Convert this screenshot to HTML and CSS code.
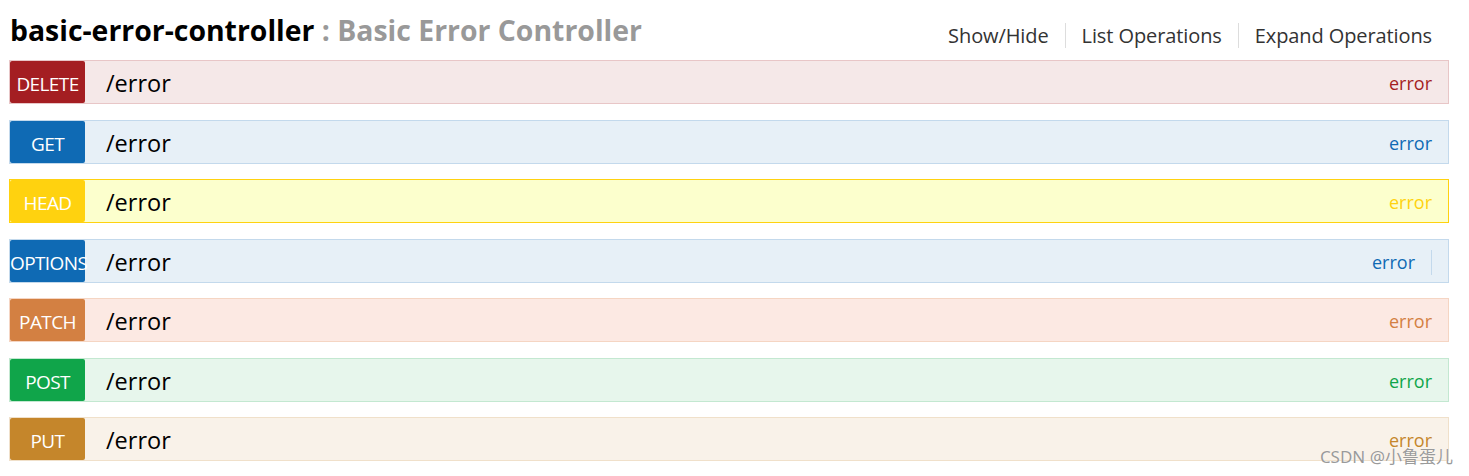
FILE: index.html
```html
<!DOCTYPE html>
<html lang="en">
<head>
<meta charset="utf-8">
<title>basic-error-controller</title>
<link rel="stylesheet" href="styles.css">
</head>
<body>
<div class="resource">
  <div class="heading">
    <h2 class="title"><span class="name">basic-error-controller</span><span class="desc"> : Basic Error Controller</span></h2>
    <ul class="options">
      <li>Show/Hide</li>
      <li>List Operations</li>
      <li>Expand Operations</li>
    </ul>
  </div>
  <ul class="endpoints">
    <li class="op delete"><span class="method">DELETE</span><span class="path">/error</span><ul class="op-opts"><li>error</li></ul></li>
    <li class="op get"><span class="method">GET</span><span class="path">/error</span><ul class="op-opts"><li>error</li></ul></li>
    <li class="op head"><span class="method">HEAD</span><span class="path">/error</span><ul class="op-opts"><li>error</li></ul></li>
    <li class="op options-m"><span class="method">OPTIONS</span><span class="path">/error</span><ul class="op-opts"><li class="sep">error</li></ul></li>
    <li class="op patch"><span class="method">PATCH</span><span class="path">/error</span><ul class="op-opts"><li>error</li></ul></li>
    <li class="op post"><span class="method">POST</span><span class="path">/error</span><ul class="op-opts"><li>error</li></ul></li>
    <li class="op put"><span class="method">PUT</span><span class="path">/error</span><ul class="op-opts"><li>error</li></ul></li>
  </ul>
</div>
<div class="watermark">CSDN @小鲁蛋儿</div>
</body>
</html>
```

FILE: styles.css
```css
html, body {
  margin: 0;
  padding: 0;
  background: #fff;
}
body {
  font-family: "Open Sans", "Noto Sans", "Noto Sans CJK SC", sans-serif;
  color: #000;
  position: relative;
  height: 476px;
  overflow: hidden;
}
.resource {
  width: 1440px;
  padding-left: 9px;
}
.heading {
  height: 60px;
  display: flex;
  justify-content: space-between;
  align-items: flex-start;
}
.title {
  margin: 0;
  padding: 10px 0 0 1px;
  font-size: 28.4px;
  line-height: 40px;
  font-weight: 700;
  letter-spacing: 0;
}
.title .name { color: #000; }
.title .desc { color: #999; }
.options {
  list-style: none;
  margin: 23px 0 0;
  padding: 0;
  display: flex;
}
.options li {
  font-size: 20px;
  line-height: 25px;
  color: #333;
  padding: 0 16px 0 16px;
  letter-spacing: -0.1px;
}
.options li + li {
  border-left: 1px solid #ddd;
}
.options li:last-child {
  padding-right: 17px;
}
.endpoints {
  list-style: none;
  margin: 0;
  padding: 0;
}
.op {
  display: flex;
  align-items: center;
  height: 42px;
  border: 1px solid;
  margin-bottom: 15.5px;
}
.method {
  flex: none;
  width: 75px;
  height: 42px;
  border-radius: 2px;
  color: #fff;
  font-size: 19px;
  line-height: 46px;
  text-align: center;
  white-space: nowrap;
  letter-spacing: -0.6px;
}
.path {
  padding-left: 21px;
  padding-top: 2px;
  font-size: 23.5px;
  line-height: 30px;
  color: #000;
}
.op-opts {
  list-style: none;
  margin: 0 0 0 auto;
  padding: 3px 16px 0 0;
  display: flex;
}
.op-opts li {
  font-size: 18px;
  line-height: 25px;
}
.op-opts li.sep {
  padding-right: 16px;
  border-right: 1px solid #c3d9ec;
}

.delete { background: #f5e8e8; border-color: #e8c6c7; }
.delete .method { background: #a41e22; }
.delete .op-opts li { color: #a41e22; }

.get { background: #e7f0f7; border-color: #c3d9ec; }
.get .method { background: #0f6ab4; }
.get .op-opts li { color: #0f6ab4; }

.head { background: #fcffcd; border-color: #ffd20f; }
.head .method { background: #ffd20f; }
.head .op-opts li { color: #ffd20f; }

.options-m { background: #e7f0f7; border-color: #c3d9ec; }
.options-m .method { background: #0f6ab4; }
.options-m .op-opts li { color: #0f6ab4; }

.patch { background: #fce9e3; border-color: #f5d5c3; }
.patch .method { background: #d38042; }
.patch .op-opts li { color: #d38042; }

.post { background: #e7f6ec; border-color: #c3e8d1; }
.post .method { background: #10a54a; }
.post .op-opts li { color: #10a54a; }

.put { background: #f9f2e9; border-color: #f0e0ca; }
.put .method { background: #c5862b; }
.put .op-opts li { color: #c5862b; }

.watermark {
  position: absolute;
  right: 16px;
  top: 446px;
  font-family: "Noto Sans", "Noto Sans CJK SC", sans-serif;
  font-size: 17px;
  line-height: 22px;
  color: #9a9a9a;
  text-shadow: 0 0 1px #fff;
}
```
